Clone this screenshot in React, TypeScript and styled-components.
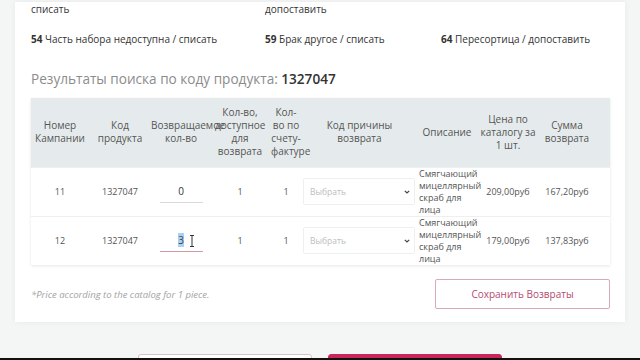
import React, { useEffect, useRef } from "react";
import styled, { createGlobalStyle } from "styled-components";

const Global = createGlobalStyle`
  html, body { margin: 0; padding: 0; }
  body {
    background: #f4f6f6;
    font-family: "Open Sans", "Noto Sans", sans-serif;
    color: #333;
  }
  * { box-sizing: border-box; }
`;

const Page = styled.div`
  width: 640px;
  height: 360px;
  overflow: hidden;
  display: flex;
  flex-direction: column;
  background: #f4f6f6;
`;

const Card = styled.section`
  margin: 2px 15px 0 15px;
  background: #fff;
  box-shadow: 0 0 6px rgba(0, 0, 0, 0.06);
  padding: 1px 15px 13px 16px;
  display: flex;
  flex-direction: column;
`;

const ReasonGrid = styled.div`
  display: grid;
  grid-template-columns: 234px 176px 1fr;
  font-size: 10px;
  color: #333;
  line-height: 13px;
`;

const ReasonRow = styled(ReasonGrid)<{ $top: number }>`
  margin-top: ${(p) => p.$top}px;
`;

const Reason = styled.div``;

const Code = styled.b`
  font-weight: 700;
`;

const Heading = styled.h2`
  margin: 23px 0 0 0;
  font-size: 13.6px;
  line-height: 20px;
  font-weight: 400;
  color: #8c8c8c;
`;

const HeadingNum = styled.span`
  color: #333;
  font-weight: 600;
`;

const TableWrap = styled.div`
  margin-top: 9px;
  box-shadow: 0 1px 3px rgba(0, 0, 0, 0.1);
`;

const Table = styled.table`
  width: 579px;
  border-collapse: collapse;
  table-layout: fixed;
`;

const Th = styled.th<{ $pad?: number }>`
  background: #e5ebec;
  height: 69px;
  font-size: 10px;
  line-height: 13px;
  font-weight: 400;
  color: #555;
  text-align: center;
  vertical-align: middle;
  padding: 0 ${(p) => (p.$pad ?? 5)}px;
`;

const Td = styled.td<{ $align?: string }>`
  height: 49px;
  padding: 0;
  font-size: 9px;
  line-height: 12px;
  color: #555;
  text-align: ${(p) => p.$align || "center"};
  vertical-align: middle;
  border-top: 1px solid #eef0f0;
`;

const Desc = styled.div`
  padding-left: 3px;
  font-size: 9px;
  line-height: 12px;
  color: #555;
`;

const InputBox = styled.div`
  position: relative;
  display: inline-block;
`;

const QtyInput = styled.input`
  width: 43px;
  height: 22px;
  border: none;
  border-bottom: 1px solid #d9d9d9;
  outline: none;
  text-align: center;
  font-family: "Open Sans", sans-serif;
  font-size: 10px;
  color: #333;
  padding: 0;
  background: transparent;
  &:focus {
    border-bottom-color: #d39aa6;
  }
  &::selection {
    background: #a9d0f5;
    color: #444;
  }
`;

const Cursor = styled.svg`
  position: absolute;
  left: 29px;
  top: 5px;
`;

const SelectBox = styled.div`
  width: 112px;
  height: 27px;
  border: 1px solid #eef0f0;
  border-radius: 2px;
  display: flex;
  align-items: center;
  justify-content: space-between;
  padding: 0 4px 0 6px;
  font-size: 8.5px;
  color: #bdbdbd;
  text-align: left;
`;

const Footer = styled.div`
  margin-top: 14px;
  display: flex;
  align-items: center;
  justify-content: space-between;
`;

const Note = styled.div`
  font-size: 9.5px;
  font-style: italic;
  color: #a3a3a3;
`;

const OutlineButton = styled.button`
  width: 175px;
  height: 30px;
  border: 1px solid #d9a9b7;
  border-radius: 2px;
  background: #fff;
  color: #b54a70;
  font-family: "Open Sans", sans-serif;
  font-size: 10px;
`;

const BottomBar = styled.div`
  margin-top: auto;
  display: flex;
  justify-content: center;
  gap: 16px;
  height: 4px;
  overflow: hidden;
`;

const GhostBtn = styled.div<{ $filled?: boolean }>`
  width: 174px;
  height: 20px;
  border: 1px solid ${(p) => (p.$filled ? "#c8265d" : "#d7c3c9")};
  border-radius: 3px;
  background: ${(p) => (p.$filled ? "#c8265d" : "#fff")};
`;

const Letterbox = styled.div`
  height: 2px;
  background: #111;
`;

const Chevron = () => (
  <svg width="6" height="4" viewBox="0 0 6 4">
    <path d="M0.8 0.8 L3 3 L5.2 0.8" fill="none" stroke="#444" strokeWidth="1.2" />
  </svg>
);

const rows = [
  { camp: "11", code: "1327047", qty: "0", avail: "1", inv: "1", price: "209,00руб", sum: "167,20руб" },
  { camp: "12", code: "1327047", qty: "3", avail: "1", inv: "1", price: "179,00руб", sum: "137,83руб" },
];

export default function App() {
  const focusRef = useRef<HTMLInputElement>(null);
  useEffect(() => {
    const el = focusRef.current;
    if (el) {
      el.focus();
      el.select();
    }
  }, []);

  return (
    <Page>
      <Global />
      <Card>
        <ReasonGrid>
          <Reason>списать</Reason>
          <Reason>допоставить</Reason>
          <Reason />
        </ReasonGrid>
        <ReasonRow $top={17}>
          <Reason>
            <Code>54</Code> Часть набора недоступна / списать
          </Reason>
          <Reason>
            <Code>59</Code> Брак другое / списать
          </Reason>
          <Reason>
            <Code>64</Code> Пересортица / допоставить
          </Reason>
        </ReasonRow>
        <Heading>
          Результаты поиска по коду продукта: <HeadingNum>1327047</HeadingNum>
        </Heading>
        <TableWrap>
          <Table>
            <colgroup>
              <col style={{ width: 58 }} />
              <col style={{ width: 62 }} />
              <col style={{ width: 60 }} />
              <col style={{ width: 58 }} />
              <col style={{ width: 34 }} />
              <col style={{ width: 113 }} />
              <col style={{ width: 62 }} />
              <col style={{ width: 60 }} />
              <col style={{ width: 58 }} />
              <col style={{ width: 14 }} />
            </colgroup>
            <thead>
              <tr>
                <Th $pad={3}>Номер Кампании</Th>
                <Th $pad={8}>Код продукта</Th>
                <Th $pad={0}>Возвращаемое кол-во</Th>
                <Th $pad={4}>Кол-во, доступное для возврата</Th>
                <Th $pad={2}>Кол-во по счету-фактуре</Th>
                <Th $pad={18}>Код причины возврата</Th>
                <Th $pad={0}>Описание</Th>
                <Th $pad={1}>Цена по каталогу за 1 шт.</Th>
                <Th $pad={6}>Сумма возврата</Th>
                <Th $pad={0} />
              </tr>
            </thead>
            <tbody>
              {rows.map((r, i) => (
                <tr key={r.camp}>
                  <Td>{r.camp}</Td>
                  <Td>{r.code}</Td>
                  <Td>
                    <InputBox>
                      <QtyInput
                        ref={i === 1 ? focusRef : undefined}
                        defaultValue={r.qty}
                      />
                      {i === 1 && (
                        <Cursor width="6" height="12" viewBox="0 0 6 12">
                          <path d="M1 0.5 H5 M3 0.5 V11.5 M1 11.5 H5" stroke="#333" strokeWidth="1" fill="none" />
                        </Cursor>
                      )}
                    </InputBox>
                  </Td>
                  <Td>{r.avail}</Td>
                  <Td>{r.inv}</Td>
                  <Td $align="left">
                    <SelectBox>
                      <span>Выбрать</span>
                      <Chevron />
                    </SelectBox>
                  </Td>
                  <Td $align="left">
                    <Desc>Смягчающий мицеллярный скраб для лица</Desc>
                  </Td>
                  <Td>{r.price}</Td>
                  <Td>{r.sum}</Td>
                  <Td />
                </tr>
              ))}
            </tbody>
          </Table>
        </TableWrap>
        <Footer>
          <Note>*Price according to the catalog for 1 piece.</Note>
          <OutlineButton>Сохранить Возвраты</OutlineButton>
        </Footer>
      </Card>
      <BottomBar>
        <GhostBtn />
        <GhostBtn $filled />
      </BottomBar>
      <Letterbox />
    </Page>
  );
}
